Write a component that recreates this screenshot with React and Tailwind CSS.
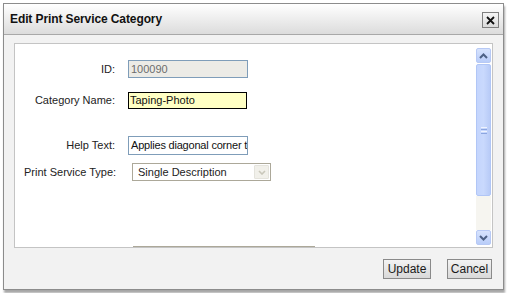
import React from "react";

const font = { fontFamily: "Tahoma, 'Liberation Sans', 'DejaVu Sans', sans-serif" };

function ScrollButton({ dir }) {
  return (
    <div className="w-[15px] h-[15px] rounded-[2px] border border-[#b7c9f5] bg-gradient-to-b from-[#d7e3fd] to-[#b9cdf9] flex items-center justify-center">
      <svg width="9" height="6" viewBox="0 0 9 6">
        {dir === "up" ? (
          <path d="M1 5 L4.5 1.5 L8 5" fill="none" stroke="#4d6185" strokeWidth="2" />
        ) : (
          <path d="M1 1 L4.5 4.5 L8 1" fill="none" stroke="#4d6185" strokeWidth="2" />
        )}
      </svg>
    </div>
  );
}

export default function App() {
  return (
    <div className="w-[507px] h-[293px] bg-white relative overflow-hidden" style={font}>
      <div className="absolute left-[3px] top-[3px] w-[501px] h-[287px] border border-[#8c8c8c] flex flex-col shadow-[1px_3px_2px_rgba(0,0,0,0.35)]">
        {/* Title bar */}
        <div className="h-[31px] bg-gradient-to-b from-white to-[#dcdcdc] border-b border-[#a8a8a8] flex items-center pl-[6px] pr-[3px]">
          <span className="text-[12px] font-bold text-[#111] flex-1 tracking-[-0.1px]">Edit Print Service Category</span>
          <div className="w-[17px] h-[16px] border border-[#7f7f7f] bg-gradient-to-b from-[#f4f4f4] to-[#dcdcdc] flex items-center justify-center mr-[1px] mt-[2px]">
            <svg width="9" height="9" viewBox="0 0 9 9">
              <path d="M1 1 L8 8 M8 1 L1 8" stroke="#111" strokeWidth="1.8" />
            </svg>
          </div>
        </div>
        {/* Body */}
        <div className="flex-1 bg-[#f2f2f2] flex flex-col px-[10px] pt-[8px]">
          <div className="h-[205px] bg-white border border-[#c4c4c4] flex">
            <div className="flex-1 flex flex-col text-[11px] text-[#222]">
              <div className="flex items-center mt-[16px]">
                <div className="w-[100px] text-right">ID:</div>
                <div className="ml-[13px] w-[120px] h-[18px] border border-[#7f9db9] bg-[#ecebe6] text-[#6d6d6d] pl-[2px] leading-[16px]">100090</div>
              </div>
              <div className="flex items-center mt-[14px]">
                <div className="w-[100px] text-right">Category Name:</div>
                <div className="ml-[13px] w-[119px] h-[17px] border border-black bg-[#ffffc4] text-[#111] pl-[1px] leading-[15px]">Taping-Photo</div>
              </div>
              <div className="flex items-center mt-[27px]">
                <div className="w-[100px] text-right">Help Text:</div>
                <div className="ml-[13px] w-[120px] h-[19px] border border-[#7f9db9] bg-white text-[#111] pl-[2px] leading-[17px] overflow-hidden whitespace-nowrap tracking-[-0.2px]">Applies diagonal corner t</div>
              </div>
              <div className="flex items-center mt-[8px]">
                <div className="w-[108px] pl-[9px] whitespace-nowrap">Print Service Type:</div>
                <div className="ml-[9px] w-[139px] h-[18px] border border-[#aca899] bg-white flex items-center pl-[5px] pr-[1px]">
                  <span className="flex-1 text-[#222]">Single Description</span>
                  <div className="w-[15px] h-[14px] border border-[#e4e3dc] bg-[#f1f0ea] flex items-center justify-center rounded-[1px]">
                    <svg width="8" height="5" viewBox="0 0 8 5">
                      <path d="M1 1 L4 4 L7 1" fill="none" stroke="#c9c7ba" strokeWidth="1.6" />
                    </svg>
                  </div>
                </div>
              </div>
              <div className="flex-1" />
              <div className="ml-[118px] w-[182px] h-[1px] bg-[#aca899]" />
            </div>
            {/* Scrollbar */}
            <div className="w-[15px] mt-[4px] mr-[1px] flex flex-col">
              <ScrollButton dir="up" />
              <div className="mt-[1px] h-[132px] rounded-[2px] border border-[#b1c6f6] bg-gradient-to-r from-[#c4d5fd] via-[#c9d9fd] to-[#b8cbf7] flex items-center justify-center">
                <div className="flex flex-col gap-[1px]">
                  <div className="w-[6px] h-[1px] bg-[#eef3fe]" />
                  <div className="w-[6px] h-[1px] bg-[#8ca6e0]" />
                  <div className="w-[6px] h-[1px] bg-[#eef3fe]" />
                  <div className="w-[6px] h-[1px] bg-[#8ca6e0]" />
                </div>
              </div>
              <div className="flex-1 bg-[#f6f5f0]" />
              <ScrollButton dir="down" />
              <div className="h-[2px]" />
            </div>
          </div>
          {/* Buttons */}
          <div className="flex justify-end gap-[16px] mt-[11px] pr-[1px]">
            <button className="w-[48px] h-[20px] border border-[#8a8a8a] bg-gradient-to-b from-[#f3f3f3] to-[#d9d9d9] text-[12px] text-[#1a1a1a] leading-none">Update</button>
            <button className="w-[45px] h-[20px] border border-[#8a8a8a] bg-gradient-to-b from-[#f3f3f3] to-[#d9d9d9] text-[12px] text-[#1a1a1a] leading-none">Cancel</button>
          </div>
        </div>
      </div>
    </div>
  );
}
